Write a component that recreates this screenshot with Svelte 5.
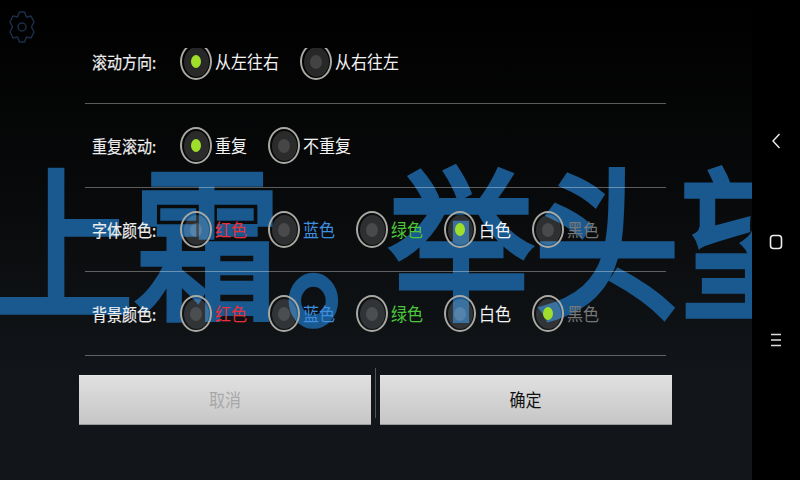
<script>
  const rows = [
    { label: '滚动方向:', options: [
      { text: '从左往右', color: 'white', on: true },
      { text: '从右往左', color: 'white', on: false }
    ]},
    { label: '重复滚动:', options: [
      { text: '重复', color: 'white', on: true },
      { text: '不重复', color: 'white', on: false }
    ]},
    { label: '字体颜色:', options: [
      { text: '红色', color: 'red', on: false },
      { text: '蓝色', color: 'blue', on: false },
      { text: '绿色', color: 'green', on: false },
      { text: '白色', color: 'white', on: true },
      { text: '黑色', color: 'gray', on: false }
    ]},
    { label: '背景颜色:', options: [
      { text: '红色', color: 'red', on: false },
      { text: '蓝色', color: 'blue', on: false },
      { text: '绿色', color: 'green', on: false },
      { text: '白色', color: 'white', on: false },
      { text: '黑色', color: 'gray', on: true }
    ]}
  ];
</script>

<div class="screen">
  <main class="main">
    <div class="watermark">上霜<span class="stop">。</span>举头望</div>

    <header class="head">
      <svg class="gear" width="28" height="34" viewBox="0 0 28 34" fill="none" stroke="#1c2e47" stroke-width="1.5" stroke-linejoin="round">
        <path d="M11.500 2h5l2 5 4.500-1 3 6-2.500 5 2.500 5-3 6-4.500-1-2 5h-5l-2-5-4.500 1-3-6 2.500-5-2.500-5 3-6 4.500 1z" />
        <circle cx="14" cy="17" r="4" />
      </svg>
    </header>

    <div class="viewport">
      <div class="list">
        {#each rows as row}
          <section class="row">
            <span class="label">{row.label}</span>
            <div class="options">
              {#each row.options as opt}
                <div class="option">
                  <span class="radio"><span class="fill"><span class="dot" class:on={opt.on}></span></span></span>
                  <span class="text {opt.color}">{opt.text}</span>
                </div>
              {/each}
            </div>
          </section>
        {/each}
      </div>
    </div>

    <div class="actions">
      <button class="btn off"><span class="cap">取消</span></button>
      <span class="sep"></span>
      <button class="btn"><span class="cap">确定</span></button>
    </div>
  </main>

  <nav class="nav">
    <svg width="12" height="18" viewBox="0 0 12 18" fill="none" stroke="#eee" stroke-width="1.4"><path d="M9.500 2 3 9l6.500 7" /></svg>
    <svg width="14" height="16" viewBox="0 0 14 16" fill="none" stroke="#eee" stroke-width="1.6"><rect x="1.500" y="1.500" width="11" height="13" rx="3" /></svg>
    <svg width="12" height="14" viewBox="0 0 12 14" fill="none" stroke="#ddd" stroke-width="1.400"><path d="M1 1.500h10M1 7h10M1 12.500h10" /></svg>
  </nav>
</div>

<style>
  :global(body) { margin: 0; background: #000; }
  .screen {
    width: 800px; height: 480px; display: flex; overflow: hidden;
    font-family: "Noto Sans CJK SC", sans-serif;
  }
  .main {
    position: relative; width: 752px; height: 480px; overflow: hidden;
    background: linear-gradient(180deg, #000 0%, #08090a 40%, #12161a 80%, #12161a 100%);
  }
  .watermark {
    position: absolute; left: -12px; top: 141px; white-space: nowrap;
    font-size: 146px; line-height: 168px; font-weight: 400; color: #19598f;
    -webkit-text-stroke: 5px #19598f;
    transform: scaleY(1.12); transform-origin: 0 0;
  }
  .stop { display: inline-block; width: 108px; padding-left: 5px; box-sizing: border-box; position: relative; top: 8px; }
  .head { position: relative; height: 48px; padding: 10px 0 0 8px; box-sizing: border-box; }
  .gear { display: block; }
  .viewport { position: relative; height: 309px; overflow: hidden; }
  .list { margin-top: -28px; margin-left: 85px; width: 581px; }
  .row {
    height: 84px; box-sizing: border-box; padding-left: 7px;
    display: flex; align-items: center;
    border-bottom: 1px solid rgba(255,255,255,.34);
  }
  .label { display: inline-block; width: 88px; font-size: 15px; color: #eee; line-height: 20px; transform: scaleY(1.12); -webkit-text-stroke: .2px #eee; }
  .options { display: flex; gap: 21px; }
  .option { display: flex; align-items: center; gap: 3px; }
  .radio {
    width: 32px; height: 37px; box-sizing: border-box; border-radius: 50%;
    border: 2px solid #a9a8a2; padding: 1.5px; display: flex;
  }
  .fill {
    flex: 1; border-radius: 50%; background: rgba(255,255,255,.15);
    display: flex; align-items: center; justify-content: center;
  }
  .dot { width: 12px; height: 14px; border-radius: 50%; background: rgba(255,255,255,.13); }
  .dot.on { width: 10px; height: 13px; background: #9fdf2c; }
  .text { display: inline-block; font-size: 16px; line-height: 20px; transform: scaleY(1.12); position: relative; top: -1px; }
  .white { color: #f4f4f4; }
  .red { color: #e8303c; }
  .blue { color: #3f8fe0; }
  .green { color: #4cc93a; }
  .gray { color: #777; }
  .actions {
    position: relative; margin: 11px 0 0 79px; width: 593px; height: 57px;
    display: flex; align-items: flex-start;
  }
  .btn {
    width: 292px; height: 50px; margin-top: 7px; border: 0; padding: 0;
    border-top: 1px solid #e8e8e8; border-bottom: 1px solid #999;
    background: linear-gradient(180deg, #e0e0e0, #c6c6c6);
    font: 400 16px "Noto Sans CJK SC", sans-serif; color: #111;
  }
  .cap { display: inline-block; transform: scaleY(1.12); position: relative; top: -1px; }
  .btn.off { color: #a8a8a8; }
  .sep { width: 1px; height: 50px; margin: 0 4px 0 3.5px; background: #555; }
  .nav {
    width: 48px; height: 480px; background: #000; box-sizing: border-box;
    display: flex; flex-direction: column; align-items: center;
    justify-content: space-between; padding: 132px 0 133px 0;
  }
</style>
